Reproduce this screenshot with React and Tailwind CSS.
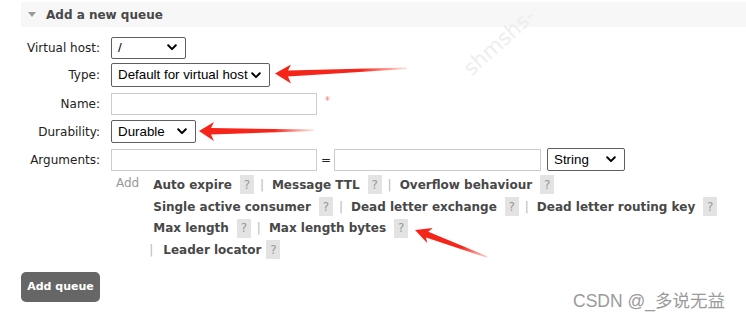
import React from 'react';

const font = { fontFamily: '"DejaVu Sans", Verdana, sans-serif' };

const Chevron = () => (
  <svg width="10" height="7" viewBox="0 0 10 7" className="shrink-0">
    <path d="M1.2 1.3 L5 5.1 L8.8 1.3" fill="none" stroke="#000" strokeWidth="2" strokeLinecap="round" strokeLinejoin="round" />
  </svg>
);

const Select = ({ value, className }) => (
  <div
    className={`flex items-center justify-between border border-[#5f5f5f] rounded-[2px] bg-white pl-[6px] pr-[8px] text-[13.33px] text-black ${className}`}
    style={{ fontFamily: '"Liberation Sans", Arial, sans-serif' }}
  >
    <span className="leading-none">{value}</span>
    <Chevron />
  </div>
);

const TextInput = ({ className }) => (
  <div className={`border border-[#cccccc] bg-white ${className}`}></div>
);

const Help = ({ className = 'ml-[8px]' }) => (
  <span className={`inline-flex items-center justify-center w-[14px] h-[19px] bg-[#e3e3e3] text-[#999] text-[12px] font-normal ${className}`}>?</span>
);

const Pipe = ({ className = 'ml-[6px]' }) => (
  <span className={`text-[#b8b8b8] font-normal text-[12px] ${className}`}>|</span>
);

const Row = ({ label, height, children }) => (
  <div className={`flex items-center ${height}`}>
    <div className="w-[100px] text-right text-[12px] text-[#222]">{label}</div>
    <div className="ml-[11px] flex items-center">{children}</div>
  </div>
);

const Arrows = () => (
  <svg className="absolute inset-0 pointer-events-none" width="746" height="320" viewBox="0 0 746 320">
    <defs>
      <linearGradient id="fade1" x1="1" y1="0" x2="0" y2="0">
        <stop offset="0" stopColor="#ff3b2a" stopOpacity="0.15" />
        <stop offset="0.35" stopColor="#f6251a" stopOpacity="1" />
        <stop offset="1" stopColor="#f6251a" />
      </linearGradient>
      <linearGradient id="fade3" x1="1" y1="1" x2="0" y2="0">
        <stop offset="0" stopColor="#ff3b2a" stopOpacity="0.2" />
        <stop offset="0.35" stopColor="#f6251a" stopOpacity="1" />
        <stop offset="1" stopColor="#f6251a" />
      </linearGradient>
    </defs>
    <polygon
      points="275,73.5 291,64.5 288,70.5 407,67.5 407,69 288,76.5 291,83.5"
      fill="url(#fade1)"
    />
    <polygon
      points="199,131 214,122 211,128 314,129.5 314,131 211,134.5 214,141"
      fill="url(#fade1)"
    />
    <polygon
      points="415,230 432.8,228.1 428.3,231.8 487.3,256.3 486.7,257.7 426.1,237.4 427.2,243.1"
      fill="url(#fade3)"
    />
  </svg>
);

export default function App() {
  return (
    <div className="relative w-[746px] h-[320px] bg-white overflow-hidden text-[#222]" style={font}>
      <div className="mt-[2px] ml-[21px] h-[25px] bg-[#f7f7f7] flex items-center">
        <span className="ml-[7px] w-0 h-0 border-l-[4.5px] border-r-[4.5px] border-t-[5px] border-l-transparent border-r-transparent border-t-[#999]"></span>
        <span className="ml-[10px] text-[12px] font-bold text-[#484848]">Add a new queue</span>
      </div>

      <span aria-hidden="true" className="absolute left-[456px] top-[27px] -rotate-[42deg] text-[21px] text-[#eeeeee] select-none pointer-events-none">shmshs-</span>

      <div className="mt-[7px] relative">
        <Row label="Virtual host:" height="h-[27px]">
          <Select value="/" className="w-[75px] h-[22px]" />
        </Row>
        <Row label="Type:" height="h-[28px]">
          <Select value="Default for virtual host" className="w-[159px] h-[24px]" />
        </Row>
        <Row label="Name:" height="h-[29px]">
          <TextInput className="w-[206px] h-[22px]" />
          <span className="ml-[8px] -mt-[6px] text-[10px] text-[#ff7b6b]">*</span>
        </Row>
        <Row label="Durability:" height="h-[27px]">
          <Select value="Durable" className="w-[85px] h-[23px]" />
        </Row>
        <Row label="Arguments:" height="h-[29px]">
          <TextInput className="w-[206px] h-[22px]" />
          <span className="ml-[4px] w-[10px] text-center text-[12px]">=</span>
          <TextInput className="ml-[3px] w-[207px] h-[22px]" />
          <Select value="String" className="ml-[6px] w-[78px] h-[23px]" />
        </Row>

        <div className="flex">
          <span className="ml-[116px] text-[12px] text-[#999]">Add</span>
          <div className="ml-[14px] text-[12px] font-bold text-[#484848]">
            <div className="flex items-center h-[21.7px]">
              <span>Auto expire</span>
              <Help />
              <Pipe />
              <span className="ml-[8px]">Message TTL</span>
              <Help />
              <Pipe />
              <span className="ml-[8px]">Overflow behaviour</span>
              <Help />
            </div>
            <div className="flex items-center h-[21.7px]">
              <span>Single active consumer</span>
              <Help />
              <Pipe />
              <span className="ml-[8px]">Dead letter exchange</span>
              <Help />
              <Pipe />
              <span className="ml-[8px]">Dead letter routing key</span>
              <Help />
            </div>
            <div className="flex items-center h-[21.7px]">
              <span>Max length</span>
              <Help />
              <Pipe />
              <span className="ml-[8px]">Max length bytes</span>
              <Help />
            </div>
            <div className="flex items-center h-[21.7px] -ml-[4px]">
              <Pipe className="" />
              <span className="ml-[10px]">Leader locator</span>
              <Help className="ml-[5px]" />
            </div>
          </div>
        </div>

        <button className="mt-[11px] ml-[21px] w-[79px] h-[30px] rounded-[5px] bg-[#666] text-white text-[11px] font-bold" style={font}>
          Add queue
        </button>
      </div>

      <span
        className="absolute left-[573px] top-[288px] text-[17.5px] text-[#9a9a9a]"
        style={{ fontFamily: '"Liberation Sans", "Noto Sans CJK SC", sans-serif' }}
      >
        CSDN @_多说无益
      </span>

      <Arrows />
    </div>
  );
}
